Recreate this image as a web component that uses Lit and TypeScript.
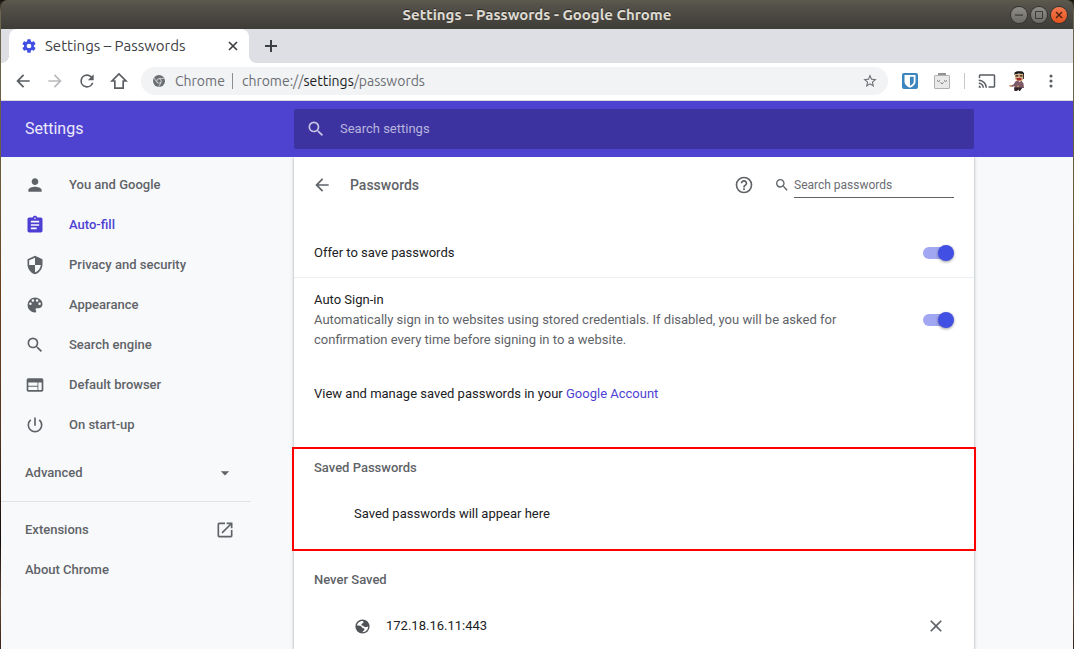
import { LitElement, html, css, svg, TemplateResult } from "lit";
import { customElement, property, state } from "lit/decorators.js";
import { classMap } from "lit/directives/class-map.js";

const icon = (body: TemplateResult, size = 20, box = "0 0 24 24") => html`
  <svg class="icon" width=${size} height=${size} viewBox=${box} fill="currentColor" aria-hidden="true">${body}</svg>
`;

const glyphs = {
  back: svg`<path d="M20 11H7.83l5.59-5.59L12 4l-8 8 8 8 1.41-1.41L7.83 13H20v-2z"/>`,
  forward: svg`<path d="M12 4l-1.41 1.41L16.17 11H4v2h12.17l-5.58 5.59L12 20l8-8z"/>`,
  reload: svg`<path d="M17.65 6.35A7.96 7.96 0 0 0 12 4a8 8 0 1 0 7.73 10h-2.08A6 6 0 1 1 12 6c1.66 0 3.14.69 4.22 1.78L13 11h7V4l-2.35 2.35z"/>`,
  home: svg`<path fill="none" stroke="currentColor" stroke-width="2" d="M12 3.500L3.600 12H7v8.500h10V12h3.400z"/>`,
  star: svg`<path d="M22 9.240l-7.190-.62L12 2 9.190 8.630 2 9.240l5.460 4.730L5.820 21 12 17.270 18.180 21l-1.630-7.030L22 9.240zM12 15.400l-3.760 2.270 1-4.280-3.320-2.880 4.380-.38L12 6.100l1.710 4.040 4.380.380-3.320 2.880 1 4.280L12 15.400z"/>`,
  close: svg`<path d="M19 6.410L17.590 5 12 10.590 6.410 5 5 6.410 10.590 12 5 17.590 6.410 19 12 13.410 17.590 19 19 17.590 13.410 12z"/>`,
  tabClose: svg`<path fill="none" stroke="currentColor" stroke-width="1.700" d="M4 4l8 8M12 4l-8 8"/>`,
  plus: svg`<path d="M2 7h5V2h2v5h5v2H9v5H7V9H2z"/>`,
  gear: svg`<path d="M19.430 12.980c.04-.32.07-.64.07-.98s-.03-.66-.07-.98l2.110-1.650a.5.5 0 0 0 .12-.64l-2-3.460a.5.5 0 0 0-.61-.22l-2.490 1a7.300 7.300 0 0 0-1.690-.98l-.38-2.650A.49.49 0 0 0 14 2h-4a.49.49 0 0 0-.49.42l-.38 2.650c-.61.25-1.170.59-1.690.98l-2.490-1a.5.5 0 0 0-.61.22l-2 3.460a.5.5 0 0 0 .12.64l2.110 1.650c-.04.32-.07.65-.07.98s.03.66.07.98l-2.110 1.650a.5.5 0 0 0-.12.64l2 3.460c.12.22.39.3.61.22l2.490-1c.52.4 1.080.73 1.690.98l.38 2.650c.03.24.24.42.49.42h4c.25 0 .46-.18.49-.42l.38-2.650c.61-.25 1.170-.59 1.690-.98l2.490 1c.23.09.49 0 .61-.22l2-3.460a.5.5 0 0 0-.12-.64l-2.110-1.650zM12 15.500a3.500 3.500 0 1 1 0-7 3.500 3.500 0 0 1 0 7z"/>`,
  search: svg`<path d="M15.500 14h-.79l-.28-.27A6.470 6.470 0 0 0 16 9.500 6.500 6.500 0 1 0 9.500 16c1.610 0 3.090-.59 4.230-1.570l.27.28v.79l5 4.990L20.490 19l-4.990-5zm-6 0C7.010 14 5 11.990 5 9.500S7.010 5 9.500 5 14 7.010 14 9.500 11.990 14 9.500 14z"/>`,
  person: svg`<path d="M12 12c2.210 0 4-1.790 4-4s-1.790-4-4-4-4 1.790-4 4 1.790 4 4 4zm0 2c-2.670 0-8 1.340-8 4v2h16v-2c0-2.660-5.330-4-8-4z"/>`,
  clipboard: svg`<path d="M19 3h-4.180C14.400 1.840 13.300 1 12 1c-1.300 0-2.400.84-2.820 2H5c-1.100 0-2 .9-2 2v14c0 1.100.9 2 2 2h14c1.100 0 2-.9 2-2V5c0-1.100-.9-2-2-2zm-7 0c.55 0 1 .45 1 1s-.45 1-1 1-1-.45-1-1 .45-1 1-1zm2 14H7v-2h7v2zm3-4H7v-2h10v2zm0-4H7V7h10v2z"/>`,
  shield: svg`<path d="M12 1L3 5v6c0 5.550 3.840 10.740 9 12 5.160-1.260 9-6.450 9-12V5l-9-4zm0 10.990h7c-.53 4.120-3.280 7.790-7 8.940V12H5V6.300l7-3.110v8.800z"/>`,
  palette: svg`<path d="M12 3a9 9 0 0 0 0 18c.83 0 1.500-.67 1.500-1.500 0-.39-.15-.74-.39-1.010-.23-.26-.38-.61-.38-.99 0-.83.67-1.500 1.500-1.500H16c2.760 0 5-2.240 5-5 0-4.420-4.030-8-9-8zm-5.500 9a1.500 1.500 0 1 1 0-3 1.500 1.500 0 0 1 0 3zm3-4a1.500 1.500 0 1 1 0-3 1.500 1.500 0 0 1 0 3zm5 0a1.500 1.500 0 1 1 0-3 1.500 1.500 0 0 1 0 3zm3 4a1.500 1.500 0 1 1 0-3 1.500 1.500 0 0 1 0 3z"/>`,
  web: svg`<path d="M20 4H4c-1.100 0-1.990.9-1.990 2L2 18c0 1.100.9 2 2 2h16c1.100 0 2-.9 2-2V6c0-1.100-.9-2-2-2zm-5 14H4v-4h11v4zm0-5H4V9h11v4zm5 5h-4V9h4v9z"/>`,
  power: svg`<path d="M13 3h-2v10h2V3zm4.830 2.170l-1.420 1.420A6.920 6.920 0 0 1 19 12a7 7 0 1 1-11.420-5.420L6.170 5.170A8.930 8.930 0 0 0 3 12a9 9 0 0 0 18 0c0-2.740-1.230-5.180-3.170-6.830z"/>`,
  caret: svg`<path d="M7 10l5 5 5-5z"/>`,
  launch: svg`<path d="M19 19H5V5h7V3H5a2 2 0 0 0-2 2v14a2 2 0 0 0 2 2h14c1.100 0 2-.9 2-2v-7h-2v7zM14 3v2h3.590l-9.830 9.830 1.410 1.410L19 6.410V10h2V3h-7z"/>`,
  help: svg`<path d="M11 18h2v-2h-2v2zm1-16a10 10 0 1 0 0 20 10 10 0 0 0 0-20zm0 18c-4.410 0-8-3.590-8-8s3.590-8 8-8 8 3.590 8 8-3.590 8-8 8zm0-14c-2.210 0-4 1.790-4 4h2c0-1.100.9-2 2-2s2 .9 2 2c0 2-3 1.750-3 5h2c0-2.250 3-2.500 3-5 0-2.210-1.790-4-4-4z"/>`,
  globe: svg`<circle cx="12" cy="12" r="10"/><path fill="#fff" d="M9.500 4.500c-2.800.8-5 3.200-5.400 6.200 2.200 0 4.700-.2 6.400 1.300 1 .9.500 2.300 2.500 2.500 1.500.1 2.200.7 1.500 2.300-.6 1.300-2.200 1.500-2.500 3.200 4.400.1 8-3.400 8-8l-2.500.8c-1.800.5-3-.7-4.300-1.600-1.200-.9-2.700-.6-2.700-2.200 0-1.200 1.300-1.400 2.600-1.500V4.700c-.8-.5-2.300-.5-3.600-.2z"/>`,
  cast: svg`<path d="M21 3H3c-1.100 0-2 .9-2 2v3h2V5h18v14h-7v2h7c1.100 0 2-.9 2-2V5c0-1.100-.9-2-2-2zM1 18v3h3c0-1.660-1.340-3-3-3zm0-4v2c2.760 0 5 2.240 5 5h2c0-3.870-3.130-7-7-7zm0-4v2a9 9 0 0 1 9 9h2c0-6.080-4.930-11-11-11z"/>`,
  more: svg`<circle cx="12" cy="4.500" r="2.300"/><circle cx="12" cy="12" r="2.300"/><circle cx="12" cy="19.500" r="2.300"/>`,
  chrome: svg`<circle cx="12" cy="12" r="12"/><circle cx="12" cy="12" r="4.500" fill="none" stroke="#f1f3f4" stroke-width="1.500"/><path fill="none" stroke="#f1f3f4" stroke-width="1.300" d="M12 6.800h10.600M7.500 14.600L2.200 5.400M16.500 14.600L11.200 23.800"/>`,
  vault: svg`<rect width="16" height="16" rx="2" fill="#3b86bf"/><path fill="#fff" d="M2.500 2h11v6.300c0 3.200-2.500 5.300-5.500 6.500-3-1.200-5.500-3.300-5.500-6.500z"/><path fill="#3b86bf" d="M8 3.800h3.700v4.600c0 2-1.600 3.400-3.700 4.400z"/>`,
  face: svg`<path fill="#929292" d="M4 0h8v2H4z"/><rect x=".5" y="2.500" width="15" height="13" rx=".5" fill="#e9e9e9" stroke="#b0b0b0"/><path fill="none" stroke="#777" d="M3 7.500l1.500 1 1.500-1M10 7.500l1.500 1 1.500-1M6.500 9.500L8 10.800l1.500-1.300"/>`,
  avatar: svg`
    <path fill="#1b1715" d="M5.500 1.500L8 .200h5l2 1.800v6h-1V3L9 2.600 6.500 4H5.500z"/>
    <path fill="#d9b488" d="M6 3h8.200v5.500l-1.500 1.800H8.300L6 8z"/>
    <path fill="#1b1715" d="M6.500 4.300h2.800v1.200H6.500zM10.800 4.300h2.700v1.200h-2.700z"/>
    <path fill="#a02d2c" d="M7 7h5.500v1.400L11 9.600H8.500z"/>
    <path fill="#7c5a68" d="M6.500 10.200l2.500-.5 1.500 1.300 2-1.200 2 2.700.5 4.500H5.500v-2l-2.500 1-1-1.500 2.500-.9z"/>
    <path fill="#c58c62" d="M0 14l2.800.2v1.800L.500 15.500zM8 14.500h2V16H8z"/>
    <path fill="#302329" d="M5 16.500h8.500L11 20h-1l-.5-1.500L8 20H5.500z"/>`,
  minimize: svg`<path d="M4 7.500h8v1.200H4z"/>`,
  maximize: svg`<path fill="none" stroke="currentColor" d="M4.500 4.500h7v7h-7z"/>`,
  quit: svg`<path fill="none" stroke="currentColor" stroke-width="1.400" d="M5 5l6 6M11 5l-6 6"/>`,
};

const reset = css`
  *, *::before, *::after { box-sizing: border-box; }
  h1, h2, p, ul { margin: 0; padding: 0; font: inherit; }
  ul { list-style: none; }
  a { color: inherit; text-decoration: none; }
  button { border: 0; padding: 0; background: none; color: inherit; font: inherit; display: grid; place-items: center; }
  input { font: inherit; color: inherit; border: 0; outline: 0; padding: 0; margin: 0; background: none; min-width: 0; }
  .icon { display: block; flex: none; }
`;

@customElement("browser-chrome")
class BrowserChrome extends LitElement {
  static styles = [reset, css`
    :host { display: block; font-family: Ubuntu, "Noto Sans", sans-serif; font-size: 14px; line-height: 20px; color: #3c4043; }
    .titlebar {
      height: 29px; display: grid; grid-template-columns: 1fr auto 1fr; align-items: center;
      padding: 0 6px; border-radius: 6px 6px 0 0;
      background: linear-gradient(#5d5a4c, #56534b 4px, #3e3c37);
    }
    .title { grid-column: 2; color: #dfdbd2; font-weight: 700; font-size: 15px; text-shadow: 0 -1px 0 #2b2a26; }
    .controls { display: flex; gap: 4px; justify-content: flex-end; }
    .control {
      width: 16px; height: 16px; border-radius: 50%; color: #3c3b37; box-shadow: 0 0 0 1px #34332f;
      background: linear-gradient(#8f8d87, #6d6b65);
    }
    .quit { background: linear-gradient(#f4794e, #e4531f); color: #4c1f10; }
    .tabs { height: 34px; display: flex; padding-left: 8px; background: #dedfe5; }
    .tab {
      position: relative; width: 240px; display: flex; align-items: center; gap: 8px; padding: 0 8px 0 12px;
      background: #fff; border-radius: 8px 8px 0 0; font-size: 15px;
    }
    .tab::before, .tab::after { content: ""; position: absolute; bottom: 0; width: 8px; height: 8px; }
    .tab::before { right: 100%; background: radial-gradient(circle at 0 0, transparent 8px, #fff 8px); }
    .tab::after { left: 100%; background: radial-gradient(circle at 100% 0, transparent 8px, #fff 8px); }
    .favicon { color: #424fe3; }
    .tab-name { flex: 1; white-space: nowrap; }
    .tab-close { width: 16px; height: 16px; }
    .new-tab { width: 28px; margin-left: 8px; }
    .toolbar {
      height: 38px; display: flex; align-items: center; gap: 4px; padding: 0 8px 1px; background: #fff;
      color: #5a5d62; border-bottom: 1px solid #d8d9dc;
    }
    .tool { width: 28px; height: 28px; flex: none; }
    .dim { color: #b9babd; }
    .omnibox {
      flex: 1; min-width: 0; height: 28px; margin: 0 4px; padding: 0 10px 0 12px; border-radius: 14px; background: #f1f3f4;
      display: flex; align-items: center; color: #6b6e73;
    }
    .origin { margin-left: 10px; padding-right: 7px; border-right: 1px solid #8b8d91; line-height: 16px; }
    .url { flex: 1; min-width: 0; margin-left: 9px; line-height: 16px; white-space: nowrap; outline: 0; }
    .host { color: #202124; }
    .rule { width: 1px; height: 16px; margin: 0 4px; background: #c6c8cb; }
  `];

  render() {
    return html`
      <header class="titlebar">
        <h1 class="title">Settings – Passwords - Google Chrome</h1>
        <div class="controls">
          <button class="control" aria-label="Minimise">${icon(glyphs.minimize, 16, "0 0 16 16")}</button>
          <button class="control" aria-label="Maximise">${icon(glyphs.maximize, 16, "0 0 16 16")}</button>
          <button class="control quit" aria-label="Close window">${icon(glyphs.quit, 16, "0 0 16 16")}</button>
        </div>
      </header>
      <div class="tabs">
        <div class="tab">
          <span class="favicon">${icon(glyphs.gear, 16)}</span>
          <span class="tab-name">Settings – Passwords</span>
          <button class="tab-close" aria-label="Close tab">${icon(glyphs.tabClose, 16, "0 0 16 16")}</button>
        </div>
        <button class="new-tab" aria-label="New tab">${icon(glyphs.plus, 16, "0 0 16 16")}</button>
      </div>
      <nav class="toolbar">
        <button class="tool" aria-label="Back">${icon(glyphs.back)}</button>
        <button class="tool dim" aria-label="Forward">${icon(glyphs.forward)}</button>
        <button class="tool" aria-label="Reload">${icon(glyphs.reload)}</button>
        <button class="tool" aria-label="Home">${icon(glyphs.home)}</button>
        <div class="omnibox">
          ${icon(glyphs.chrome, 12)}
          <span class="origin">Chrome</span>
          <div class="url" role="textbox" aria-label="Address" contenteditable="true">chrome://<span class="host">settings</span>/passwords</div>
          <button aria-label="Bookmark">${icon(glyphs.star, 16)}</button>
        </div>
        <button class="tool" aria-label="Password vault">${icon(glyphs.vault, 16, "0 0 16 16")}</button>
        <button class="tool" aria-label="Extension">${icon(glyphs.face, 16, "0 0 16 16")}</button>
        <span class="rule"></span>
        <button class="tool" aria-label="Cast">${icon(glyphs.cast, 18)}</button>
        <button class="tool" aria-label="Profile">${icon(glyphs.avatar, 20, "0 0 20 20")}</button>
        <button class="tool" aria-label="Menu">${icon(glyphs.more, 16)}</button>
      </nav>
    `;
  }
}

@customElement("settings-menu")
class SettingsMenu extends LitElement {
  @state() private selected = "Auto-fill";

  private items: [string, TemplateResult][] = [
    ["You and Google", glyphs.person],
    ["Auto-fill", glyphs.clipboard],
    ["Privacy and security", glyphs.shield],
    ["Appearance", glyphs.palette],
    ["Search engine", glyphs.search],
    ["Default browser", glyphs.web],
    ["On start-up", glyphs.power],
  ];

  static styles = [reset, css`
    :host { display: block; width: 250px; padding-top: 8px; color: #5f6368; font-weight: 500; }
    .item { display: flex; align-items: center; gap: 24px; width: 100%; height: 40px; padding: 0 16px 0 24px; text-align: left; }
    .selected { color: #4d3fd3; }
    .spread { justify-content: space-between; }
    .advanced { margin: 8px 0; }
    .more { border-top: 1px solid #e0e2e5; padding-top: 8px; }
  `];

  render() {
    return html`
      <nav>
        <ul>
          ${this.items.map(([name, glyph]) => html`
            <li>
              <a href="#" class=${classMap({ item: true, selected: name === this.selected })}
                @click=${(e: Event) => { e.preventDefault(); this.selected = name; }}>${icon(glyph)}<span>${name}</span></a>
            </li>`)}
        </ul>
        <button class="item spread advanced">Advanced ${icon(glyphs.caret)}</button>
        <div class="more">
          <a href="#" class="item spread">Extensions ${icon(glyphs.launch)}</a>
          <a href="#" class="item">About Chrome</a>
        </div>
      </nav>
    `;
  }
}

@customElement("setting-toggle")
class SettingToggle extends LitElement {
  @property() label = "";
  @property() detail = "";

  static styles = [reset, css`
    :host { display: block; }
    .row { display: flex; align-items: center; justify-content: space-between; gap: 24px; padding: 12px 20px; line-height: 20px; }
    .words { max-width: 540px; }
    .detail { display: block; color: #5f6368; }
    .switch { appearance: none; display: grid; align-items: center; width: 31px; height: 16px; flex: none; }
    .switch::before, .switch::after { content: ""; grid-area: 1 / 1; }
    .switch::before { width: 28px; height: 12px; border-radius: 6px; background: #bdc1c6; }
    .switch::after { width: 16px; height: 16px; border-radius: 50%; background: #fff; box-shadow: 0 1px 3px rgba(0, 0, 0, .4); }
    .switch:checked::before { background: #a1a7f1; }
    .switch:checked::after { justify-self: end; background: #424fe3; }
  `];

  render() {
    return html`
      <div class="row">
        <label class="words" for="switch">${this.label}${this.detail ? html`<span class="detail">${this.detail}</span>` : ""}</label>
        <input id="switch" class="switch" type="checkbox" checked>
      </div>
    `;
  }
}

@customElement("passwords-page")
class PasswordsPage extends LitElement {
  static styles = [reset, css`
    :host {
      display: block; background: #fff; color: #202124;
      box-shadow: 0 1px 2px rgba(60, 64, 67, .3), 0 1px 3px 1px rgba(60, 64, 67, .15);
      line-height: 20px;
    }
    .head { display: flex; align-items: center; height: 56px; padding: 0 20px 0 18px; margin-bottom: 16px; color: #5f6368; }
    .title { flex: 1; margin-left: 18px; font-size: 14px; font-weight: 500; }
    .find { display: flex; align-items: center; gap: 4px; margin-left: 20px; font-size: 12px; }
    .find-box { width: 160px; height: 26px; border-bottom: 1px solid #5f6368; }
    .find-box::placeholder { color: #6a6d72; opacity: 1; }
    .divided { border-bottom: 1px solid #eeeff0; padding: 2px 0; }
    .account { padding: 22px 20px 45px; }
    .link { color: #4d3fd3; }
    .saved { outline: 2px solid #ff0000; padding: 9px 20px 25px; position: relative; }
    .never { padding: 21px 20px 13px; }
    .label { color: #5f6368; font-weight: 500; margin-bottom: 26px; }
    .entry { display: flex; align-items: center; padding-left: 40px; }
    .site { flex: 1; margin-left: 15px; }
    .remove { width: 36px; height: 20px; color: #5f6368; }
    .globe { color: #4f5257; }
  `];

  render() {
    return html`
      <div class="head">
        <button aria-label="Back">${icon(glyphs.back)}</button>
        <h1 class="title">Passwords</h1>
        <button aria-label="Help">${icon(glyphs.help)}</button>
        <label class="find">${icon(glyphs.search, 16)}
          <input class="find-box" type="text" aria-label="Search passwords" placeholder="Search passwords">
        </label>
      </div>
      <setting-toggle class="divided" label="Offer to save passwords"></setting-toggle>
      <setting-toggle label="Auto Sign-in"
        detail="Automatically sign in to websites using stored credentials. If disabled, you will be asked for confirmation every time before signing in to a website."></setting-toggle>
      <p class="account">View and manage saved passwords in your <a class="link" href="#">Google Account</a></p>
      <section class="saved">
        <h2 class="label">Saved Passwords</h2>
        <p class="entry">Saved passwords will appear here</p>
      </section>
      <section class="never">
        <h2 class="label">Never Saved</h2>
        <div class="entry">
          <span class="globe">${icon(glyphs.globe, 17)}</span>
          <span class="site">172.18.16.11:443</span>
          <button class="remove" aria-label="Remove 172.18.16.11:443">${icon(glyphs.close)}</button>
        </div>
      </section>
    `;
  }
}

@customElement("app-root")
class AppRoot extends LitElement {
  static styles = [reset, css`
    :host {
      display: block; min-height: 100vh; padding: 0 1px; box-sizing: border-box;
      font: 13px/20px Roboto, sans-serif;
      background: linear-gradient(#15120c, #6c6650 12px, #6b5a38 200px, #6a3f1c 290px, #543621 430px, #120d0a 540px, #604634 600px, #3a2417);
    }
    .window { min-height: 100vh; display: flex; flex-direction: column; }
    .bar, .body { display: grid; grid-template-columns: 293px minmax(0, 680px) 1fr; }
    .bar { align-items: center; height: 56px; background: #4e42d1; color: #fff; }
    .name { padding-left: 24px; font-size: 16px; color: #eceafb; }
    .search { display: flex; align-items: center; gap: 14px; height: 40px; padding: 0 12px; border-radius: 2px; background: #3c33a1; color: #c8c5e6; }
    .search-box { flex: 1; height: 20px; }
    .search-box::placeholder { color: #b9b5dd; opacity: 1; }
    .body { flex: 1; background: #f8f9fb; overflow: hidden; }
  `];

  render() {
    return html`
      <div class="window">
        <browser-chrome></browser-chrome>
        <header class="bar">
          <h1 class="name">Settings</h1>
          <label class="search">${icon(glyphs.search)}
            <input class="search-box" type="text" aria-label="Search settings" placeholder="Search settings">
          </label>
        </header>
        <main class="body">
          <settings-menu></settings-menu>
          <passwords-page></passwords-page>
        </main>
      </div>
    `;
  }
}
